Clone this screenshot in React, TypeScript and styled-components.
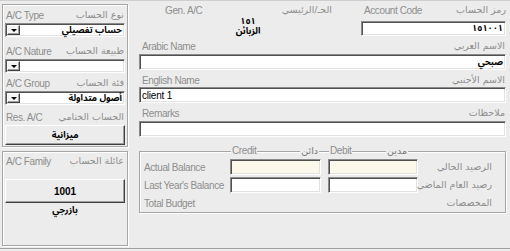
import React from 'react';
import styled, { createGlobalStyle, css } from 'styled-components';

const arabicFont = `"Noto Sans Arabic", "Noto Naskh Arabic", "DejaVu Sans Condensed", "DejaVu Sans", sans-serif`;

const GlobalStyle = createGlobalStyle`
  html, body {
    margin: 0;
    padding: 0;
    background: #ececec;
  }
  body {
    font-family: "Liberation Sans", "DejaVu Sans", sans-serif;
    font-size: 10px;
    letter-spacing: -0.4px;
  }
`;

const sunken = css`
  box-sizing: border-box;
  border-top: 1px solid #8a8a8a;
  border-left: 1px solid #8a8a8a;
  border-right: 1px solid #ffffff;
  border-bottom: 1px solid #ffffff;
  box-shadow: inset 1px 1px 0 #505050, inset -1px -1px 0 #e2e2e2;
`;

const raised = css`
  box-sizing: border-box;
  border-top: 1px solid #ffffff;
  border-left: 1px solid #ffffff;
  border-right: 1px solid #404040;
  border-bottom: 1px solid #404040;
  box-shadow: inset -1px -1px 0 #a0a0a0;
`;

const Window = styled.div`
  width: 510px;
  height: 249px;
  box-sizing: border-box;
  border-top: 1px solid #cfcfcf;
  border-bottom: 1px solid #a0a0a0;
  box-shadow: 0 1px 0 #ffffff;
  display: flex;
  flex-direction: row;
  gap: 11px;
  padding-left: 2px;
`;

const LeftColumn = styled.div`
  width: 126px;
  padding-top: 3px;
  display: flex;
  flex-direction: column;
  gap: 4px;
`;

const Group = styled.div<{ $height: number; $padTop: number }>`
  box-sizing: border-box;
  height: ${(p) => p.$height}px;
  padding: ${(p) => p.$padTop}px 1px 0;
  border: 1px solid #a6a6a6;
  box-shadow: inset 1px 1px 0 #ffffff, 1px 1px 0 #ffffff;
  display: flex;
  flex-direction: column;
`;

const LabelRow = styled.div<{ $mt?: number }>`
  display: flex;
  justify-content: space-between;
  align-items: center;
  height: 14px;
  margin-top: ${(p) => p.$mt ?? 0}px;
  padding: 0 2px;
  color: #8e8e8e;
  white-space: nowrap;
`;

const ArabicLabel = styled.span`
  font-family: "DejaVu Sans", sans-serif;
  font-size: 9.5px;
  line-height: 12px;
  letter-spacing: 0;
  color: #8e8e8e;
`;

const ComboBox = styled.div`
  ${sunken};
  height: 14px;
  margin: 1px 1px 0;
  background: #ffffff;
  display: flex;
  align-items: center;
  padding: 0 2px 0 1px;
`;

const DropButton = styled.div`
  ${raised};
  width: 13px;
  height: 10px;
  background: #f4f4f4;
  display: flex;
  align-items: center;
  justify-content: center;
  &::after {
    content: '';
    border-left: 3px solid transparent;
    border-right: 3px solid transparent;
    border-top: 3px solid #000000;
  }
`;

const BoldValue = styled.span`
  font-family: ${arabicFont};
  font-weight: bold;
  font-size: 9px;
  line-height: 11px;
  letter-spacing: 0;
  color: #000000;
`;

const ComboValue = styled(BoldValue)`
  flex: 1;
  text-align: right;
  direction: rtl;
`;

const PushButton = styled.div<{ $height: number; $mt: number }>`
  ${raised};
  height: ${(p) => p.$height}px;
  margin: ${(p) => p.$mt}px 1px 0;
  background: #ececec;
  display: flex;
  align-items: center;
  justify-content: center;
`;

const ButtonNumber = styled.span`
  font-family: "Liberation Sans", sans-serif;
  font-weight: bold;
  font-size: 10px;
  letter-spacing: 0;
  color: #000000;
`;

const Caption = styled(BoldValue)`
  text-align: center;
  line-height: 14px;
  margin-top: 1px;
`;

const RightColumn = styled.div`
  width: 367px;
  display: flex;
  flex-direction: column;
`;

const TopSection = styled.div`
  display: flex;
  flex-direction: row;
  gap: 4px;
  margin-top: 2px;
`;

const GenBlock = styled.div`
  width: 218px;
  display: flex;
  flex-direction: column;
`;

const GenHeader = styled(LabelRow)`
  padding: 0 25px 0 26px;
`;

const GenValue = styled(BoldValue)`
  display: block;
  text-align: center;
  white-space: pre-line;
  line-height: 10px;
  margin-top: 0px;
`;

const CodeBlock = styled.div`
  flex: 1;
  display: flex;
  flex-direction: column;
`;

const CodeHeader = styled(LabelRow)`
  padding: 0 0 0 3px;
`;

const TextField = styled.div<{ $height: number; $mt?: number; $bg?: string; $rtl?: boolean }>`
  ${sunken};
  height: ${(p) => p.$height}px;
  margin-top: ${(p) => p.$mt ?? 0}px;
  background: ${(p) => p.$bg ?? '#ffffff'};
  display: flex;
  align-items: center;
  justify-content: ${(p) => (p.$rtl ? 'flex-end' : 'flex-start')};
  padding: 0 2px;
  color: #000000;
  white-space: nowrap;
`;

const PlainValue = styled.span`
  font-family: "Liberation Sans", sans-serif;
  font-size: 10px;
  letter-spacing: -0.2px;
  color: #000000;
`;

const FieldHeader = styled(LabelRow)`
  padding: 0 1px 0 3px;
`;

const BalanceGroup = styled.div`
  margin-top: 14px;
  box-sizing: border-box;
  border: 1px solid #a6a6a6;
  box-shadow: inset 1px 1px 0 #ffffff, 1px 1px 0 #ffffff;
  display: flex;
  flex-direction: column;
`;

const balanceColumns = css`
  display: grid;
  grid-template-columns: 83px 91px 90px 80px;
  column-gap: 7px;
`;

const BalanceHeader = styled.div`
  ${balanceColumns};
  height: 14px;
  margin-top: -8px;
`;

const ColumnTitle = styled.div<{ $endPad: number }>`
  display: flex;
  justify-content: space-between;
  align-items: center;
  padding: 0 ${(p) => p.$endPad}px 0 1px;
  color: #8e8e8e;
`;

const TitleText = styled.span`
  background: #ececec;
  padding: 0 1px;
  line-height: 12px;
`;

const TitleArabic = styled(ArabicLabel)`
  background: #ececec;
  padding: 0 1px;
  color: #777777;
`;

const BalanceRows = styled.div`
  ${balanceColumns};
  grid-auto-rows: 16px;
  row-gap: 2px;
  margin-top: 1px;
  padding-bottom: 1px;
`;

const RowLabel = styled.div`
  display: flex;
  align-items: center;
  padding-left: 4px;
  color: #8e8e8e;
  white-space: nowrap;
`;

const RowArabic = styled(ArabicLabel)`
  display: flex;
  align-items: center;
  justify-content: flex-end;
  padding-right: 13px;
  white-space: nowrap;
`;

function Combo({ value }: { value?: string }): React.JSX.Element {
  return (
    <ComboBox>
      <DropButton />
      <ComboValue>{value}</ComboValue>
    </ComboBox>
  );
}

const balanceRows = [
  { en: 'Actual Balance', ar: 'الرصيد الحالي', bg: '#fdf9ea', input: true },
  { en: "Last Year's Balance", ar: 'رصيد العام الماضي', bg: '#ffffff', input: true },
  { en: 'Total Budget', ar: 'المخصصات', bg: '', input: false },
];

function App(): React.JSX.Element {
  return (
    <>
      <GlobalStyle />
      <Window>
        <LeftColumn>
          <Group $height={143} $padTop={3}>
            <LabelRow>
              <span>A/C Type</span>
              <ArabicLabel>نوع الحساب</ArabicLabel>
            </LabelRow>
            <Combo value="حساب تفصيلي" />
            <LabelRow $mt={7}>
              <span>A/C Nature</span>
              <ArabicLabel>طبيعة الحساب</ArabicLabel>
            </LabelRow>
            <Combo />
            <LabelRow $mt={3}>
              <span>A/C Group</span>
              <ArabicLabel>فئة الحساب</ArabicLabel>
            </LabelRow>
            <Combo value="أصول متداولة" />
            <LabelRow $mt={5}>
              <span>Res. A/C</span>
              <ArabicLabel>الحساب الختامي</ArabicLabel>
            </LabelRow>
            <PushButton $height={20} $mt={1}>
              <BoldValue>ميزانية</BoldValue>
            </PushButton>
          </Group>
          <Group $height={95} $padTop={2}>
            <LabelRow>
              <span>A/C Family</span>
              <ArabicLabel>عائلة الحساب</ArabicLabel>
            </LabelRow>
            <PushButton $height={24} $mt={11}>
              <ButtonNumber>1001</ButtonNumber>
            </PushButton>
            <Caption>بازرجي</Caption>
          </Group>
        </LeftColumn>

        <RightColumn>
          <TopSection>
            <GenBlock>
              <GenHeader>
                <span>Gen. A/C</span>
                <ArabicLabel>الحـ/الرئيسي</ArabicLabel>
              </GenHeader>
              <GenValue>{'١٥١\nالزبائن'}</GenValue>
            </GenBlock>
            <CodeBlock>
              <CodeHeader>
                <span>Account Code</span>
                <ArabicLabel>رمز الحساب</ArabicLabel>
              </CodeHeader>
              <TextField $height={15} $mt={4} $rtl>
                <BoldValue>١٥١٠٠١</BoldValue>
              </TextField>
            </CodeBlock>
          </TopSection>

          <FieldHeader $mt={2}>
            <span>Arabic Name</span>
            <ArabicLabel>الاسم العربي</ArabicLabel>
          </FieldHeader>
          <TextField $height={16} $mt={1} $rtl>
            <BoldValue>صبحي</BoldValue>
          </TextField>
          <FieldHeader $mt={3}>
            <span>English Name</span>
            <ArabicLabel>الاسم الأجنبي</ArabicLabel>
          </FieldHeader>
          <TextField $height={16}>
            <PlainValue>client 1</PlainValue>
          </TextField>
          <FieldHeader $mt={3}>
            <span>Remarks</span>
            <ArabicLabel>ملاحظات</ArabicLabel>
          </FieldHeader>
          <TextField $height={16} $mt={1} />

          <BalanceGroup>
            <BalanceHeader>
              <span />
              <ColumnTitle $endPad={2}>
                <TitleText>Credit</TitleText>
                <TitleArabic>دائن</TitleArabic>
              </ColumnTitle>
              <ColumnTitle $endPad={10}>
                <TitleText>Debit</TitleText>
                <TitleArabic>مدين</TitleArabic>
              </ColumnTitle>
            </BalanceHeader>
            <BalanceRows>
              {balanceRows.map((row) => (
                <React.Fragment key={row.en}>
                  <RowLabel>{row.en}</RowLabel>
                  {row.input ? <TextField $height={16} $bg={row.bg} /> : <span />}
                  {row.input ? <TextField $height={16} $bg={row.bg} /> : <span />}
                  <RowArabic>{row.ar}</RowArabic>
                </React.Fragment>
              ))}
            </BalanceRows>
          </BalanceGroup>
        </RightColumn>
      </Window>
    </>
  );
}

export default App;
